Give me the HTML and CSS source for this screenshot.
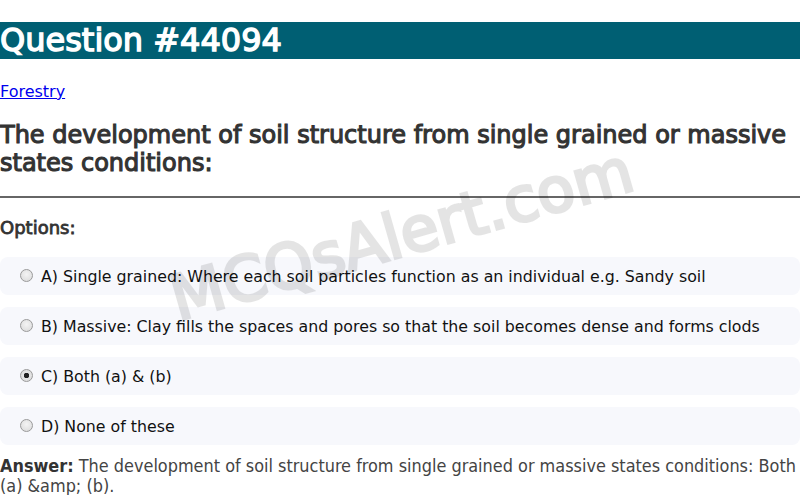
FILE: index.html
```html
<!DOCTYPE html>
<html>
<head>
<meta charset="utf-8">
<link rel="stylesheet" href="styles.css">
</head>
<body>
<div class="page">
  <h1 class="title">Question #44094</h1>
  <p class="cat"><a href="#">Forestry</a></p>
  <h2 class="question">The development of soil structure from single grained or massive states conditions:</h2>
  <hr class="rule">
  <h3 class="opts-head">Options:</h3>
  <div class="options">
    <label class="option"><input type="radio" name="q" disabled> A) Single grained: Where each soil particles function as an individual e.g. Sandy soil</label>
    <label class="option"><input type="radio" name="q" disabled> B) Massive: Clay fills the spaces and pores so that the soil becomes dense and forms clods</label>
    <label class="option"><input type="radio" name="q" checked disabled> C) Both (a) &amp; (b)</label>
    <label class="option"><input type="radio" name="q" disabled> D) None of these</label>
  </div>
  <p class="answer"><strong>Answer:</strong> The development of soil structure from single grained or massive states conditions: Both (a) &amp;amp; (b).</p>
  <div class="watermark">MCQsAlert.com</div>
</div>
</body>
</html>
```
FILE: styles.css
```css
html, body { margin: 0; padding: 0; background: #fff; }
body { font-family: "DejaVu Sans", sans-serif; color: #333; }
.page { position: relative; overflow: hidden; height: 495px; }
.title {
  margin: 22px 0 0;
  background: #005f73;
  color: #fff;
  font-size: 32px;
  line-height: 37px;
  height: 37px;
  font-weight: normal;
  -webkit-text-stroke: 1.4px #fff;
}
.cat { margin: 23px 0 0; font-size: 16px; line-height: 20px; }
.cat a { color: #0000ee; }
.question {
  margin: 19px 0 0;
  font-size: 24px;
  line-height: 28px;
  font-weight: normal;
  color: #333;
  -webkit-text-stroke: 1.1px #333;
}
.rule { margin: 19px 0 0; border: 0; border-top: 2px solid #666; height: 0; }
.opts-head {
  margin: 18px 0 0; font-size: 18px; line-height: 24px;
  font-weight: normal; -webkit-text-stroke: 0.8px #333;
}
.options { display: flex; flex-direction: column; gap: 12px; margin-top: 17px; }
.option {
  display: flex; align-items: center; gap: 8px;
  height: 38px; padding-left: 20px;
  background: #f7f8fc; border-radius: 8px;
  font-size: 15.8px; color: #111;
}
.option input {
  -webkit-appearance: none; appearance: none;
  margin: 0; width: 13px; height: 13px; border-radius: 50%;
  border: 1px solid #9a9a9a;
  background: radial-gradient(circle at 50% 40%, #f4f4f4, #d8d8d8);
  box-sizing: border-box; position: relative; top: -1px;
}
.option input:checked {
  background: radial-gradient(circle, #222 0 2.5px, #e6e6e6 3px, #d6d6d6);
}
.answer {
  margin: 11px 0 0;
  font-family: "DejaVu Sans Condensed", "Liberation Sans Narrow", sans-serif;
  font-size: 17.9px; line-height: 20px; color: #444;
}
.answer strong { color: #333; }
.watermark {
  position: absolute; left: 162px; top: 265px;
  font-size: 62px; font-weight: normal; color: #000;
  -webkit-text-stroke: 3px #000;
  opacity: 0.1;
  transform: rotate(-16deg); transform-origin: left top;
  pointer-events: none; white-space: nowrap;
}
```
